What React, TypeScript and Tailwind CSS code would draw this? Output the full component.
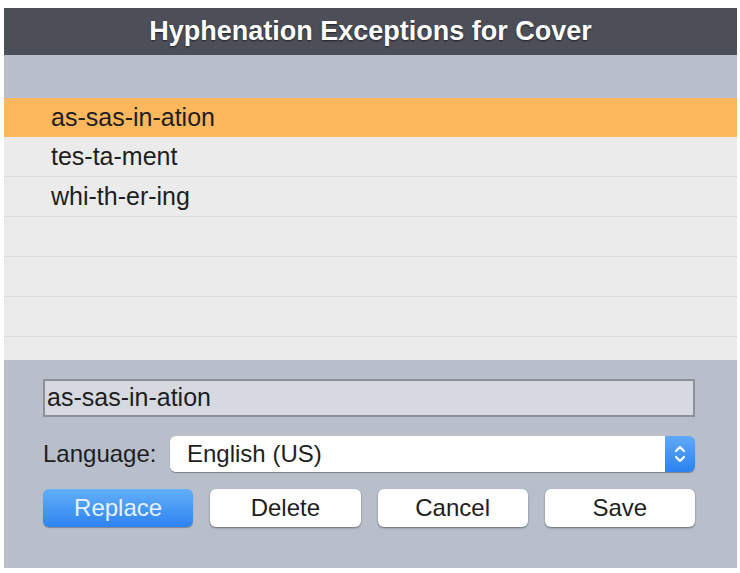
import React from "react";

const rows = ["as-sas-in-ation", "tes-ta-ment", "whi-th-er-ing", "", "", "", ""];

export default function App() {
  return (
    <div
      className="w-[740px] h-[573px] bg-white pt-[8px] pl-[4px] overflow-hidden"
      style={{ fontFamily: '"Liberation Sans", Arial, sans-serif' }}
    >
      <div className="w-[733px] h-[560px] flex flex-col">
        <div className="h-[47px] bg-[#4c4f58] flex items-center justify-center">
          <span className="text-white text-[27px] font-bold [text-shadow:0_1px_2px_rgba(0,0,0,0.6)]">
            Hyphenation Exceptions for Cover
          </span>
        </div>
        <div className="h-[43px] bg-[#b8bfcb]" />
        <div className="h-[262px] bg-[#ebebeb] flex flex-col overflow-hidden">
          {rows.map((r, i) =>
            i === 0 ? (
              <div key={i} className="h-[39px] shrink-0 bg-[#fdb75d] flex items-center pl-[47px] text-[25px] text-[#1e1e1e]">
                {r}
              </div>
            ) : (
              <div
                key={i}
                className="h-[40px] shrink-0 border-b border-dotted border-[#cfcfcf] flex items-center pl-[47px] text-[25px] text-[#1e1e1e]"
              >
                {r}
              </div>
            )
          )}
        </div>
        <div className="flex-1 bg-[#b9bfca] pl-[39px] pr-[42px] pt-[19px] flex flex-col">
          <div className="h-[38px] bg-[#d6dae0] border-2 border-[#8c9098] flex items-center pl-[2px] text-[25px] text-[#1e1e1e]">
            as-sas-in-ation
          </div>
          <div className="mt-[19px] h-[36px] flex items-center">
            <span className="w-[127px] text-[24px] text-[#1e1e1e]">Language:</span>
            <div className="flex-1 h-[36px] flex rounded-[6px] shadow-[0_1px_1px_rgba(0,0,0,0.35)] overflow-hidden">
              <div className="flex-1 bg-white flex items-center pl-[17px] text-[24px] text-[#1e1e1e]">English (US)</div>
              <div className="w-[30px] bg-gradient-to-b from-[#5eaaf9] to-[#2a82ef] flex items-center justify-center">
                <svg width="14" height="22" viewBox="0 0 14 22" fill="none" stroke="white" strokeWidth="2.2" strokeLinecap="round" strokeLinejoin="round">
                  <path d="M3 8 L7 4 L11 8" />
                  <path d="M3 14 L7 18 L11 14" />
                </svg>
              </div>
            </div>
          </div>
          <div className="mt-[17px] grid grid-cols-4 gap-[17px]">
            <button className="h-[38px] rounded-[6px] bg-gradient-to-b from-[#62aefa] to-[#2d84f0] text-[#e8f1ff] text-[24px] shadow-[0_1px_1px_rgba(0,0,0,0.3)]">
              Replace
            </button>
            <button className="h-[38px] rounded-[6px] bg-white text-[#1e1e1e] text-[24px] shadow-[0_1px_2px_rgba(0,0,0,0.45)]">
              Delete
            </button>
            <button className="h-[38px] rounded-[6px] bg-white text-[#1e1e1e] text-[24px] shadow-[0_1px_2px_rgba(0,0,0,0.45)]">
              Cancel
            </button>
            <button className="h-[38px] rounded-[6px] bg-white text-[#1e1e1e] text-[24px] shadow-[0_1px_2px_rgba(0,0,0,0.45)]">
              Save
            </button>
          </div>
        </div>
      </div>
    </div>
  );
}
